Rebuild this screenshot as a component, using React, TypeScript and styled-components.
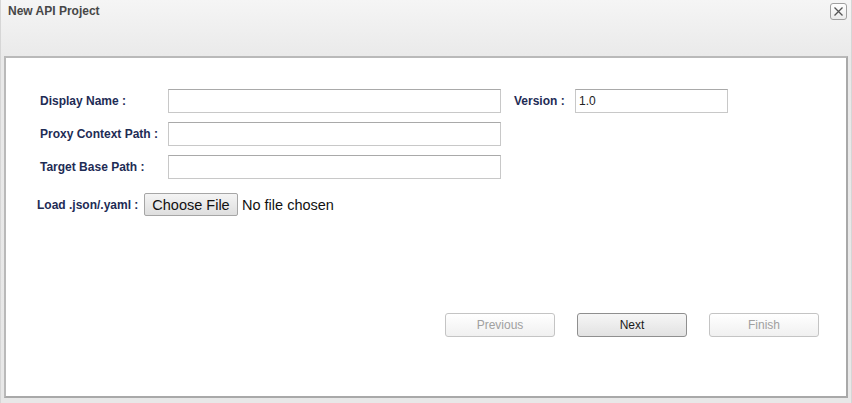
import React from "react";
import styled, { createGlobalStyle } from "styled-components";

const Global = createGlobalStyle`
  html, body { margin: 0; padding: 0; background: #ffffff; }
  body { font-family: "Liberation Sans", Arial, sans-serif; }
`;

const Dialog = styled.div`
  width: 852px;
  height: 403px;
  box-sizing: border-box;
  display: flex;
  flex-direction: column;
  background: linear-gradient(#f5f5f5, #e9e9e9 60px, #e8e8e8);
  border-left: 1px solid #d6d6d6;
  border-right: 1px solid #d6d6d6;
`;

const Header = styled.div`
  height: 56px;
  flex: none;
  display: flex;
  align-items: flex-start;
  justify-content: space-between;
  padding: 0 4px 0 7px;
  box-sizing: border-box;
`;

const Title = styled.div`
  margin-top: 4px;
  font-size: 12px;
  font-weight: bold;
  color: #474747;
  line-height: 14px;
`;

const CloseButton = styled.button`
  margin-top: 3px;
  width: 17px;
  height: 17px;
  padding: 0;
  border: 1px solid #a0a0a0;
  border-radius: 3px;
  background: linear-gradient(#ffffff, #ececec);
  display: flex;
  align-items: center;
  justify-content: center;
`;

const Panel = styled.div`
  flex: 1;
  margin: 0 3px 5px 3px;
  background: #ffffff;
  border: 2px solid #b9b9b9;
  border-right-color: #a9a9a9;
  border-bottom-color: #a9a9a9;
  display: flex;
  flex-direction: column;
  padding: 31px 27px 0 34px;
`;

const FormGrid = styled.div`
  display: grid;
  grid-template-columns: 128px 333px 13px 61px 153px;
  grid-auto-rows: 24px;
  row-gap: 9px;
  align-items: center;
`;

const Label = styled.label`
  font-size: 12px;
  font-weight: bold;
  color: #1e2c55;
  white-space: nowrap;
`;

const TextInput = styled.input`
  height: 24px;
  box-sizing: border-box;
  border: 1px solid #c8c8c8;
  border-top-color: #a9a9a9;
  padding: 2px 3px;
  font-family: "Liberation Sans", Arial, sans-serif;
  font-size: 12px;
  color: #222;
  outline: none;
  width: 100%;
`;

const FileRow = styled.div`
  display: flex;
  align-items: center;
  margin-top: 14px;
  margin-left: -3px;
`;

const FileLabel = styled.span`
  font-size: 12px;
  font-weight: bold;
  color: #1e2c55;
  width: 107px;
  white-space: nowrap;
`;

const FileButton = styled.button`
  height: 23px;
  width: 94px;
  box-sizing: border-box;
  border: 1px solid #a6a6a6;
  border-radius: 2px;
  background: linear-gradient(#f4f4f4, #dedede);
  font-family: "Liberation Sans", Arial, sans-serif;
  font-size: 14.5px;
  color: #111;
  padding: 0;
`;

const FileStatus = styled.span`
  margin-left: 4px;
  font-size: 14.5px;
  color: #111;
`;

const Spacer = styled.div`
  flex: 1;
`;

const ButtonBar = styled.div`
  display: flex;
  justify-content: flex-end;
  gap: 22px;
  margin-bottom: 59px;
`;

const ActionButton = styled.button<{ $enabled?: boolean }>`
  width: 110px;
  height: 24px;
  box-sizing: border-box;
  border: 1px solid ${(p) => (p.$enabled ? "#8f8f8f" : "#c4c4c4")};
  border-radius: 3px;
  background: ${(p) =>
    p.$enabled ? "linear-gradient(#f6f6f6, #e2e2e2)" : "linear-gradient(#ffffff, #f0f0f0)"};
  font-family: "Liberation Sans", Arial, sans-serif;
  font-size: 12px;
  color: ${(p) => (p.$enabled ? "#1a1a1a" : "#a0a0a0")};
  padding: 0;
`;

export default function App() {
  return (
    <>
      <Global />
      <Dialog>
        <Header>
          <Title>New API Project</Title>
          <CloseButton aria-label="close">
            <svg width="11" height="11" viewBox="0 0 11 11">
              <path d="M1.5 1.5 L9.5 9.5 M9.5 1.5 L1.5 9.5" stroke="#555" strokeWidth="1.3" />
            </svg>
          </CloseButton>
        </Header>
        <Panel>
          <FormGrid>
            <Label>Display Name :</Label>
            <TextInput />
            <span />
            <Label>Version :</Label>
            <TextInput defaultValue="1.0" />
            <Label>Proxy Context Path :</Label>
            <TextInput />
            <span />
            <span />
            <span />
            <Label>Target Base Path :</Label>
            <TextInput />
          </FormGrid>
          <FileRow>
            <FileLabel>Load .json/.yaml :</FileLabel>
            <FileButton>Choose File</FileButton>
            <FileStatus>No file chosen</FileStatus>
          </FileRow>
          <Spacer />
          <ButtonBar>
            <ActionButton disabled>Previous</ActionButton>
            <ActionButton $enabled>Next</ActionButton>
            <ActionButton disabled>Finish</ActionButton>
          </ButtonBar>
        </Panel>
      </Dialog>
    </>
  );
}
